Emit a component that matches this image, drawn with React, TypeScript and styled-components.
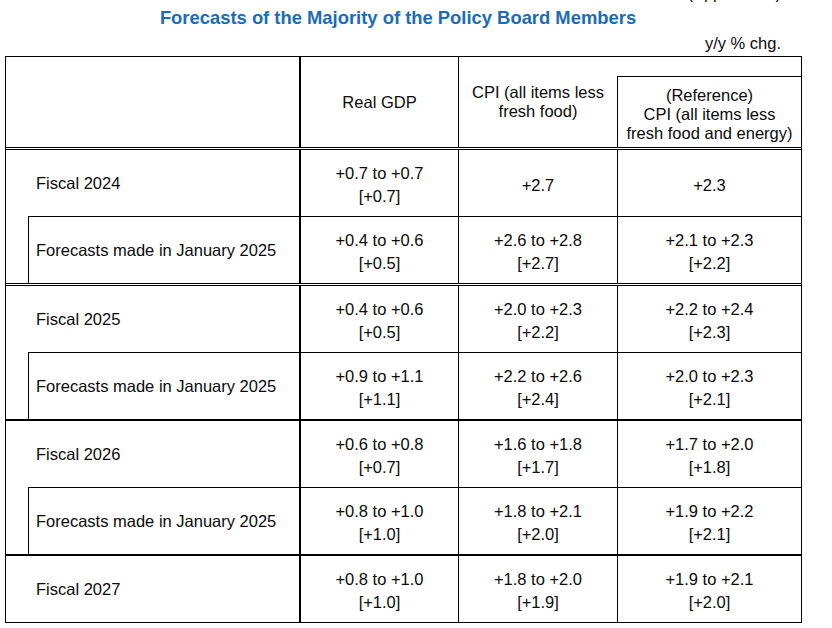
import styled, { createGlobalStyle } from 'styled-components';

type Values = string[][];

interface Group {
  label: string;
  values: Values;
  previous?: Values;
  separator: 'double' | 'thick';
}

const groups: Group[] = [
  {
    label: 'Fiscal 2024',
    values: [['+0.7 to +0.7', '[+0.7]'], ['+2.7'], ['+2.3']],
    previous: [
      ['+0.4 to +0.6', '[+0.5]'],
      ['+2.6 to +2.8', '[+2.7]'],
      ['+2.1 to +2.3', '[+2.2]'],
    ],
    separator: 'double',
  },
  {
    label: 'Fiscal 2025',
    values: [
      ['+0.4 to +0.6', '[+0.5]'],
      ['+2.0 to +2.3', '[+2.2]'],
      ['+2.2 to +2.4', '[+2.3]'],
    ],
    previous: [
      ['+0.9 to +1.1', '[+1.1]'],
      ['+2.2 to +2.6', '[+2.4]'],
      ['+2.0 to +2.3', '[+2.1]'],
    ],
    separator: 'double',
  },
  {
    label: 'Fiscal 2026',
    values: [
      ['+0.6 to +0.8', '[+0.7]'],
      ['+1.6 to +1.8', '[+1.7]'],
      ['+1.7 to +2.0', '[+1.8]'],
    ],
    previous: [
      ['+0.8 to +1.0', '[+1.0]'],
      ['+1.8 to +2.1', '[+2.0]'],
      ['+1.9 to +2.2', '[+2.1]'],
    ],
    separator: 'thick',
  },
  {
    label: 'Fiscal 2027',
    values: [
      ['+0.8 to +1.0', '[+1.0]'],
      ['+1.8 to +2.0', '[+1.9]'],
      ['+1.9 to +2.1', '[+2.0]'],
    ],
    separator: 'thick',
  },
];

const DATA_WIDTHS = [157, 158, 183];

function DataRow({ label, values, sub }: { label: string; values: Values; sub?: boolean }) {
  return (
    <Row $sub={sub}>
      <LabelCell $sub={sub}>{label}</LabelCell>
      {values.map((lines, i) => (
        <DataCell key={i} $first={i === 0} $sub={sub} $width={DATA_WIDTHS[i]}>
          {lines.map((line) => (
            <span key={line}>{line}</span>
          ))}
        </DataCell>
      ))}
    </Row>
  );
}

// 政策委員の大勢見通し
export default function App() {
  return (
    <>
      <GlobalStyle />
      <Page>
        <Appendix>(Appendix 2)</Appendix>
        <Title>Forecasts of the Majority of the Policy Board Members</Title>
        <Unit>y/y % chg.</Unit>
        <Table>
          <HeaderRow>
            <HeaderBlank />
            <HeaderCell $first $width={157}>
              Real GDP
            </HeaderCell>
            <HeaderCell $width={158}>
              <span>CPI (all items less</span>
              <span>fresh food)</span>
            </HeaderCell>
            <RefCell>
              <RefBox>
                <span>(Reference)</span>
                <span>CPI (all items less</span>
                <span>fresh food and energy)</span>
              </RefBox>
            </RefCell>
          </HeaderRow>
          {groups.map((g) => (
            <GroupBlock key={g.label} $separator={g.separator}>
              <DataRow label={g.label} values={g.values} />
              {g.previous && (
                <DataRow label="Forecasts made in January 2025" values={g.previous} sub />
              )}
            </GroupBlock>
          ))}
        </Table>
      </Page>
    </>
  );
}

const GlobalStyle = createGlobalStyle`
  html, body {
    margin: 0;
    background: #ffffff;
  }
  body {
    font-family: "Liberation Sans", Arial, sans-serif;
    font-size: 16.5px;
    color: #0a0a0a;
    overflow: hidden;
  }
`;

const Page = styled.div`
  display: flex;
  flex-direction: column;
  padding-left: 5px;
  width: 797px;
`;

// page top is cropped in the source: only the bottom of this label shows
const Appendix = styled.div`
  margin-top: -16px;
  line-height: 19px;
  text-align: right;
  padding-right: 21px;
`;

const Title = styled.h1`
  margin: 4px 0 0 -5px;
  width: 796px;
  font-size: 18.4px;
  line-height: 22px;
  font-weight: bold;
  color: #1b6cb8;
  text-align: center;
`;

const Unit = styled.div`
  margin: 5px 0 3px;
  line-height: 19px;
  text-align: right;
  padding-right: 21px;
`;

const Table = styled.div`
  display: flex;
  flex-direction: column;
  border: 1px solid #000;
  width: 797px;
  box-sizing: border-box;
`;

const HeaderRow = styled.div`
  display: flex;
  height: 90px;
  line-height: 19px;
`;

const HeaderBlank = styled.div`
  width: 293px;
`;

const HeaderCell = styled.div<{ $first?: boolean; $width: number }>`
  width: ${(p) => p.$width}px;
  border-left: ${(p) => (p.$first ? 2 : 1)}px solid #000;
  display: flex;
  flex-direction: column;
  align-items: center;
  justify-content: center;
  text-align: center;
`;

const RefCell = styled.div`
  width: 184px;
  padding-top: 19px;
  display: flex;
  flex-direction: column;
`;

const RefBox = styled.div`
  flex: 1;
  border-left: 1px solid #000;
  border-top: 1px solid #000;
  padding-top: 4px;
  display: flex;
  flex-direction: column;
  align-items: center;
  justify-content: center;
  text-align: center;
`;

const GroupBlock = styled.div<{ $separator: 'double' | 'thick' }>`
  display: flex;
  flex-direction: column;
  border-top: ${(p) => (p.$separator === 'double' ? '3px double #000' : '2px solid #000')};
`;

const Row = styled.div<{ $sub?: boolean }>`
  display: flex;
  height: ${(p) => (p.$sub ? 67 : 66)}px;
`;

const LabelCell = styled.div<{ $sub?: boolean }>`
  box-sizing: border-box;
  display: flex;
  align-items: center;
  width: ${(p) => (p.$sub ? 271 : 293)}px;
  margin-left: ${(p) => (p.$sub ? 22 : 0)}px;
  padding-left: ${(p) => (p.$sub ? 7 : 30)}px;
  border-left: ${(p) => (p.$sub ? '1px solid #000' : 'none')};
  border-top: ${(p) => (p.$sub ? '1px solid #000' : 'none')};
`;

const DataCell = styled.div<{ $first?: boolean; $sub?: boolean; $width: number }>`
  width: ${(p) => p.$width}px;
  border-left: ${(p) => (p.$first ? 2 : 1)}px solid #000;
  border-top: ${(p) => (p.$sub ? '1px solid #000' : 'none')};
  padding-top: 4px;
  display: flex;
  flex-direction: column;
  align-items: center;
  justify-content: center;
  line-height: 23px;
  text-align: center;
`;
